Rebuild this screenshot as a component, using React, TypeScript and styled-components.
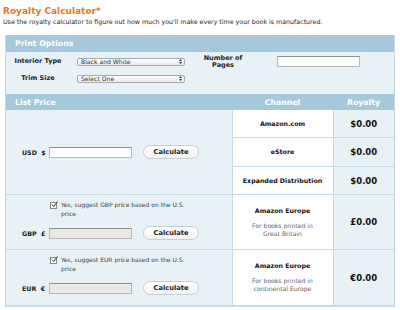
import React from 'react'
import styled, { createGlobalStyle } from 'styled-components'

const GlobalStyle = createGlobalStyle`
  body {
    margin: 0;
    background: #ffffff;
    font-family: 'DejaVu Sans', Verdana, sans-serif;
    color: #222;
  }
`

const Page = styled.div`
  padding: 6px 0 0 3px;
`

const Title = styled.h1`
  margin: 0;
  font-size: 9px;
  line-height: 11px;
  font-weight: bold;
  color: #e8771f;
`

const Intro = styled.p`
  margin: 1px 0 0;
  font-size: 6.3px;
  line-height: 8px;
  color: #222;
`

const Panel = styled.div`
  margin: 9px 0 0 2px;
  width: 390px;
  box-sizing: border-box;
  border: 1px solid #c6dbe8;
  border-top: 0;
  background: #e8f1f5;
`

const Band = styled.div`
  height: 17px;
  background: #a5c8dd;
  color: #fff;
  font-size: 7.8px;
  font-weight: bold;
  line-height: 17px;
  padding-left: 9px;
`

const OptionsGrid = styled.div`
  display: grid;
  grid-template-columns: 56px 108px 50px 83px;
  grid-template-rows: 17px 17px;
  column-gap: 11px;
  align-items: center;
  padding: 1px 0 7px 4px;

  & > :nth-child(3) {
    margin-left: 4px;
  }
  & > :nth-child(4) {
    margin-left: 20px;
  }
`

const Label = styled.div`
  font-size: 6.5px;
  font-weight: bold;
  line-height: 7px;
  text-align: center;
  color: #222;
`

const SelectWrap = styled.div`
  position: relative;
  height: 8px;
`

const Select = styled.select`
  appearance: none;
  width: 100%;
  height: 8px;
  box-sizing: border-box;
  border: 1px solid #a9a9a9;
  border-radius: 2px;
  background: linear-gradient(#ffffff, #e9e9e9);
  font-family: 'DejaVu Sans', Verdana, sans-serif;
  font-size: 6.1px;
  line-height: 6px;
  padding: 0 0 0 3px;
  margin: 0;
  color: #333;
  display: block;
`

const Arrows = styled.svg`
  position: absolute;
  right: 3px;
  top: 1.5px;
  pointer-events: none;
`

const TextInput = styled.input<{ $disabled?: boolean }>`
  box-sizing: border-box;
  height: 11px;
  width: 83px;
  margin: 0;
  padding: 0 2px;
  border: 1px solid #b9b9b9;
  border-top-color: #8f8f8f;
  background: ${({ $disabled }) => ($disabled ? '#ebe9e3' : '#ffffff')};
  font-size: 6px;
  display: block;
`

const Table = styled.table`
  width: 388px;
  border-collapse: collapse;
  table-layout: fixed;
`

const HeadCell = styled.th<{ $align?: string }>`
  height: 16px;
  padding: 0 0 0 ${({ $align }) => ($align === 'left' ? '9px' : '0')};
  background: #a5c8dd;
  color: #fff;
  font-size: 7.8px;
  font-weight: bold;
  text-align: ${({ $align }) => $align || 'center'};
`

const PriceCell = styled.td<{ $top?: boolean }>`
  vertical-align: ${({ $top }) => ($top ? 'top' : 'middle')};
  padding: 0;
  border-bottom: 1px solid #c6dbe8;
`

const ChannelCell = styled.td<{ $h: number }>`
  height: ${({ $h }) => $h}px;
  background: #fff;
  border: 1px solid #c6dbe8;
  border-top: 0;
  text-align: center;
  vertical-align: middle;
  padding: 0 4px;
`

const ChannelName = styled.div`
  font-size: 6.3px;
  font-weight: bold;
  line-height: 8px;
  color: #111;
`

const ChannelNote = styled.div`
  margin-top: 7px;
  font-size: 6.1px;
  line-height: 8px;
  color: #666;
`

const RoyaltyCell = styled.td`
  border-bottom: 1px solid #c6dbe8;
  text-align: center;
  vertical-align: middle;
  font-size: 8.5px;
  font-weight: bold;
  color: #111;
  padding: 0;
`

const PriceRow = styled.div`
  display: flex;
  align-items: center;
  padding-left: 16px;
`

const Currency = styled.span`
  width: 27px;
  font-size: 6.3px;
  font-weight: bold;
  color: #222;
  white-space: pre;
`

const CalcButton = styled.button`
  margin-left: 11px;
  width: 56px;
  height: 14px;
  box-sizing: border-box;
  border: 1px solid #c3cdd2;
  border-radius: 7px;
  background: linear-gradient(#ffffff, #f3f3f3);
  font-family: 'DejaVu Sans', Verdana, sans-serif;
  font-size: 6.7px;
  font-weight: bold;
  color: #222;
  padding: 0;
`

const Suggest = styled.label`
  display: flex;
  align-items: flex-start;
  margin: 6px 0 8px 44px;
  width: 150px;
  font-size: 6px;
  line-height: 8.5px;
  color: #444;
`

const Check = styled.span`
  flex: none;
  width: 5px;
  height: 5px;
  margin: 1px 4px 0 0;
  border: 1px solid #8a8a8a;
  background: #fff;
  position: relative;
`

const Tick = styled.svg`
  position: absolute;
  left: 0;
  top: -2px;
`

function SelectBox({ value }: { value: string }) {
  return (
    <SelectWrap>
      <Select defaultValue={value}>
        <option>{value}</option>
      </Select>
      <Arrows width="3" height="5" viewBox="0 0 3 5">
        <path d="M0 2 L1.5 0 L3 2 Z M0 3 L1.5 5 L3 3 Z" fill="#333" />
      </Arrows>
    </SelectWrap>
  )
}

function Suggestion({ code }: { code: string }) {
  return (
    <Suggest>
      <Check>
        <Tick width="7" height="7" viewBox="0 0 7 7">
          <path d="M1 3.5 L2.8 5.5 L6.5 0.5" stroke="#333" strokeWidth="1" fill="none" />
        </Tick>
      </Check>
      <span>
        Yes, suggest {code} price based on the U.S.
        <br />
        price
      </span>
    </Suggest>
  )
}

const App = () => {
  return (
    <Page>
      <GlobalStyle />
      <Title>Royalty Calculator*</Title>
      <Intro>Use the royalty calculator to figure out how much you'll make every time your book is manufactured.</Intro>
      <Panel>
        <Band>Print Options</Band>
        <OptionsGrid>
          <Label>Interior Type</Label>
          <SelectBox value="Black and White" />
          <Label>
            Number of
            <br />
            Pages
          </Label>
          <TextInput />
          <Label>Trim Size</Label>
          <SelectBox value="Select One" />
        </OptionsGrid>
        <Table>
          <colgroup>
            <col style={{ width: 226 }} />
            <col style={{ width: 101 }} />
            <col style={{ width: 61 }} />
          </colgroup>
          <thead>
            <tr>
              <HeadCell $align="left">List Price</HeadCell>
              <HeadCell>Channel</HeadCell>
              <HeadCell>Royalty</HeadCell>
            </tr>
          </thead>
          <tbody>
            <tr>
              <PriceCell rowSpan={3}>
                <PriceRow>
                  <Currency>USD  $</Currency>
                  <TextInput />
                  <CalcButton>Calculate</CalcButton>
                </PriceRow>
              </PriceCell>
              <ChannelCell $h={27}>
                <ChannelName>Amazon.com</ChannelName>
              </ChannelCell>
              <RoyaltyCell>$0.00</RoyaltyCell>
            </tr>
            <tr>
              <ChannelCell $h={28}>
                <ChannelName>eStore</ChannelName>
              </ChannelCell>
              <RoyaltyCell>$0.00</RoyaltyCell>
            </tr>
            <tr>
              <ChannelCell $h={27}>
                <ChannelName>Expanded Distribution</ChannelName>
              </ChannelCell>
              <RoyaltyCell>$0.00</RoyaltyCell>
            </tr>
            <tr>
              <PriceCell $top>
                <Suggestion code="GBP" />
                <PriceRow>
                  <Currency>GBP  £</Currency>
                  <TextInput $disabled />
                  <CalcButton>Calculate</CalcButton>
                </PriceRow>
              </PriceCell>
              <ChannelCell $h={54}>
                <ChannelName>Amazon Europe</ChannelName>
                <ChannelNote>
                  For books printed in
                  <br />
                  Great Britain
                </ChannelNote>
              </ChannelCell>
              <RoyaltyCell>£0.00</RoyaltyCell>
            </tr>
            <tr>
              <PriceCell $top>
                <Suggestion code="EUR" />
                <PriceRow>
                  <Currency>EUR  €</Currency>
                  <TextInput $disabled />
                  <CalcButton>Calculate</CalcButton>
                </PriceRow>
              </PriceCell>
              <ChannelCell $h={55}>
                <ChannelName>Amazon Europe</ChannelName>
                <ChannelNote>
                  For books printed in
                  <br />
                  continental Europe
                </ChannelNote>
              </ChannelCell>
              <RoyaltyCell>€0.00</RoyaltyCell>
            </tr>
          </tbody>
        </Table>
      </Panel>
    </Page>
  )
}

export default App
